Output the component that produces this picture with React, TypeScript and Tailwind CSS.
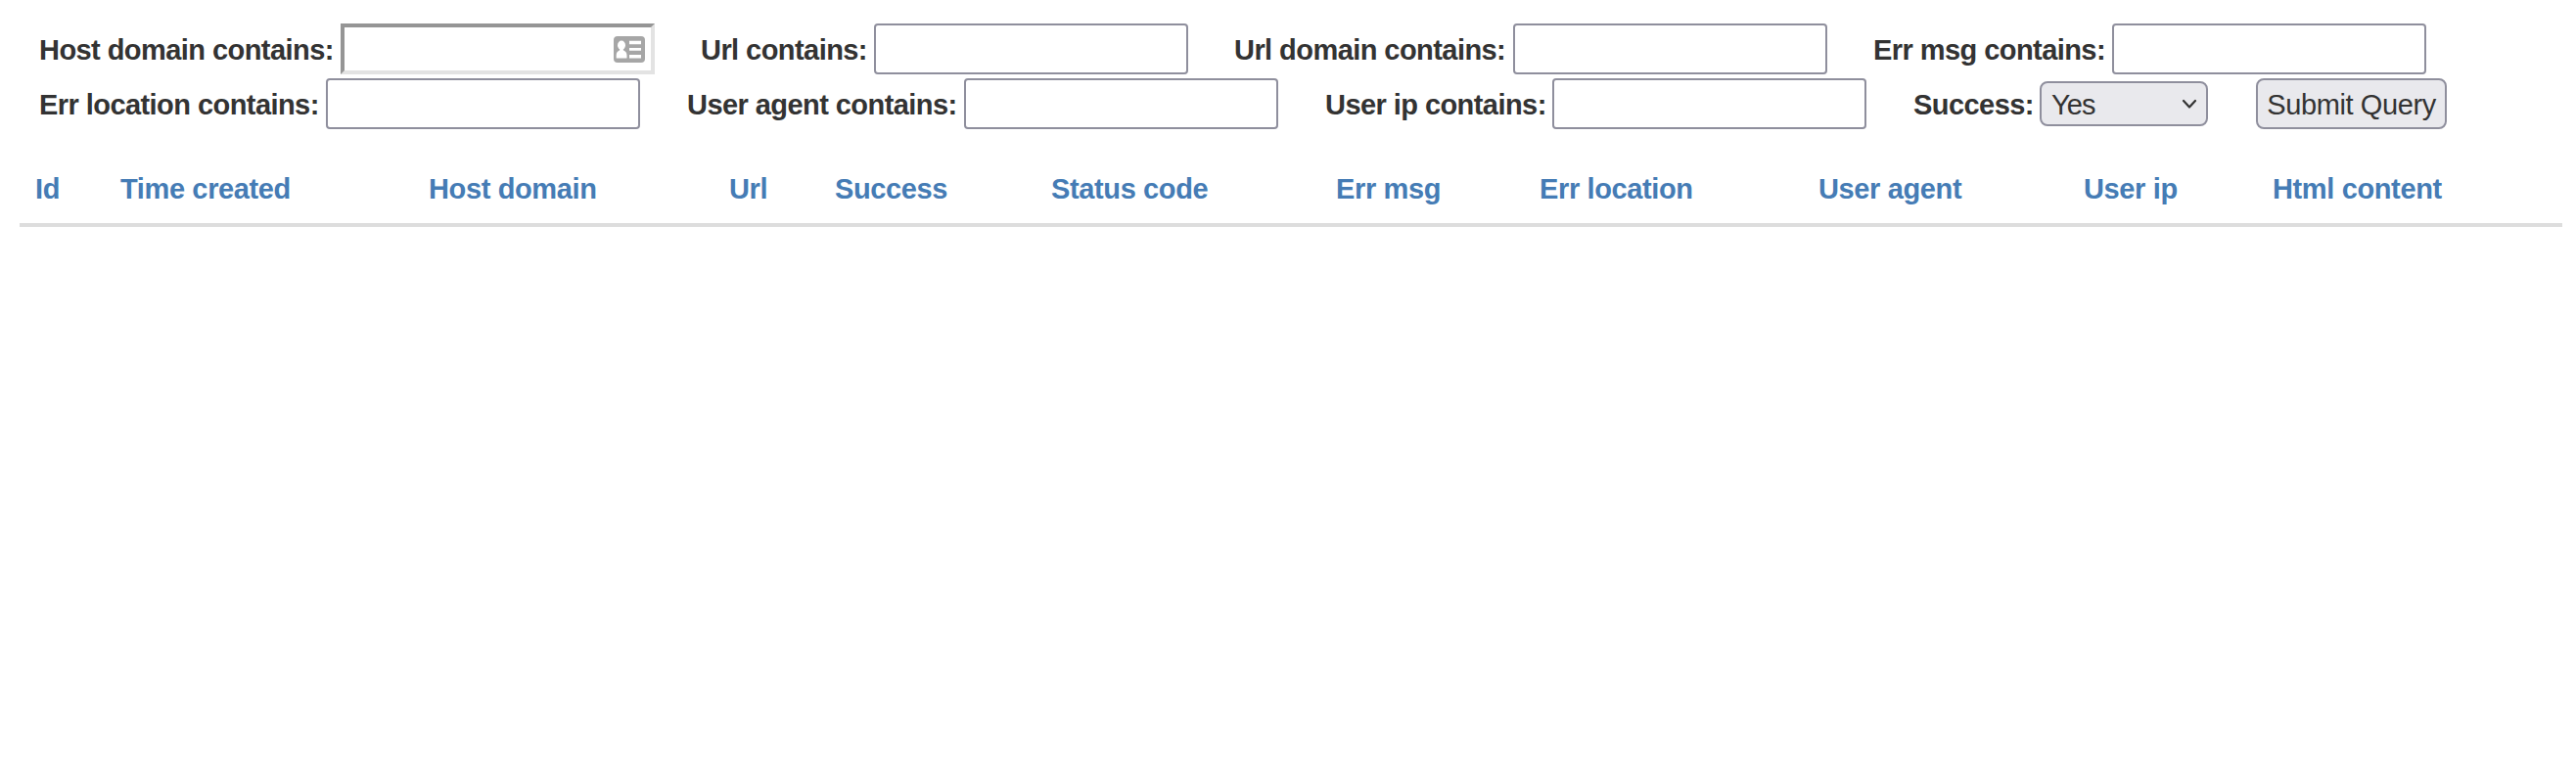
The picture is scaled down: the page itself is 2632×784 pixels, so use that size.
import type { ReactNode } from "react";

function Label({ width, children }: { width: string; children: ReactNode }) {
  return (
    <label className={`${width} shrink-0 whitespace-nowrap pt-[2px] pl-[1px] font-bold tracking-[-0.56px]`}>
      {children}
    </label>
  );
}

function TextInput() {
  return (
    <input
      type="text"
      className="h-[52px] w-[321px] shrink-0 rounded-[4px] border-2 border-[#8f8f9d] bg-white px-2 outline-none"
    />
  );
}

function ContactIcon() {
  return (
    <svg width="32" height="27" viewBox="0 0 32 27" className="shrink-0">
      <rect width="32" height="27" rx="4" fill="#a6a6a6" />
      <ellipse cx="8" cy="9.3" rx="4" ry="4.7" fill="#fff" />
      <path d="M6.2 12h3.6v2.2c2.4 1 3.7 2.8 3.7 5.3V22.500H2.700v-3c0-2.500 1.200-4.300 3.500-5.300z" fill="#fff" />
      <path d="M16 4.700h12v3.500H16zM16 12h12v2.700H16zM16 19h12v3.500H16z" fill="#fff" />
    </svg>
  );
}

const columns = [
  { name: "Id", width: "w-[87px]" },
  { name: "Time created", width: "w-[315px]" },
  { name: "Host domain", width: "w-[307px]" },
  { name: "Url", width: "w-[108px]" },
  { name: "Success", width: "w-[221px]" },
  { name: "Status code", width: "w-[291px]" },
  { name: "Err msg", width: "w-[208px]" },
  { name: "Err location", width: "w-[285px]" },
  { name: "User agent", width: "w-[271px]" },
  { name: "User ip", width: "w-[193px]" },
  { name: "Html content", width: "w-[312px]" },
];

export default function App() {
  return (
    <div className="h-[784px] w-[2632px] overflow-hidden bg-white pt-6 font-['Liberation_Sans',Arial,sans-serif] text-[29px] leading-[40px] text-[#333]">
      <form className="flex flex-col gap-1 pl-[39px]" onSubmit={(e) => e.preventDefault()}>
        <div className="flex h-[52px] items-center">
          <Label width="w-[309px]">Host domain contains:</Label>
          <div className="mr-[46px] flex h-[52px] w-[321px] shrink-0 items-center border-4 border-t-[#959595] border-r-[#e3e3e3] border-b-[#e3e3e3] border-l-[#959595] pr-[6px]">
            <input type="text" className="min-w-0 flex-1 outline-none" />
            <ContactIcon />
          </div>
          <Label width="w-[178px]">Url contains:</Label>
          <TextInput />
          <div className="w-[46px]" />
          <Label width="w-[286px]">Url domain contains:</Label>
          <TextInput />
          <div className="w-[46px]" />
          <Label width="w-[245px]">Err msg contains:</Label>
          <TextInput />
        </div>
        <div className="flex h-[52px] items-center">
          <Label width="w-[294px]">Err location contains:</Label>
          <TextInput />
          <div className="w-[47px]" />
          <Label width="w-[284px]">User agent contains:</Label>
          <TextInput />
          <div className="w-[47px]" />
          <Label width="w-[233px]">User ip contains:</Label>
          <TextInput />
          <div className="w-[47px]" />
          <Label width="w-[130px]">Success:</Label>
          <button
            type="button"
            className="mr-[49px] flex h-[46px] w-[172px] shrink-0 items-center justify-between rounded-[8px] border-2 border-[#8f8f9d] bg-[#e9e9ed] pr-[9px] pl-[10px] tracking-[-0.9px]"
          >
            <span className="pt-[2px]">Yes</span>
            <svg width="16" height="11" viewBox="0 0 16 11" fill="none" stroke="#333" strokeWidth="2.200" strokeLinecap="round" strokeLinejoin="round">
              <path d="M2 2l6 6.500L14 2" />
            </svg>
          </button>
          <button
            type="submit"
            className="h-[52px] w-[195px] shrink-0 rounded-[8px] border-2 border-[#8f8f9d] bg-[#e9e9ed] pt-[2px] whitespace-nowrap tracking-[-0.4px]"
          >
            Submit Query
          </button>
        </div>
      </form>
      <div className="mt-[25px] ml-5 flex h-[75px] w-[2598px] border-b-4 border-[#ddd] pt-4 font-bold tracking-[-0.37px] text-[#457cb5]">
        {columns.map((c) => (
          <div key={c.name} className={`${c.width} shrink-0 pl-4 whitespace-nowrap`}>
            {c.name}
          </div>
        ))}
      </div>
    </div>
  );
}
